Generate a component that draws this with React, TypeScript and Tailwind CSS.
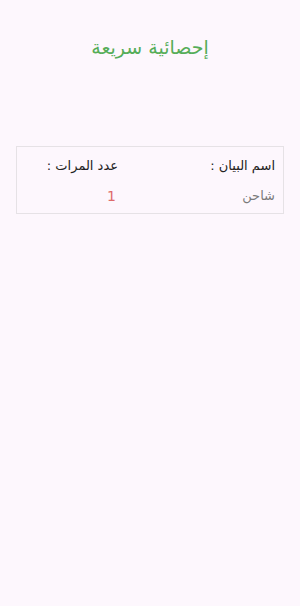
import React from 'react';

const rows = [{ name: 'شاحن', count: 1 }];

export default function App() {
    return (
        <div
            dir="rtl"
            className="w-[300px] h-[606px] bg-[#fdf7fd] px-4"
            style={{ fontFamily: '"DejaVu Sans", "Noto Sans", sans-serif' }}
        >
            <h1 className="pt-[34px] text-center text-[19px] leading-[26px] text-[#55ad58]">
                إحصائية سريعة
            </h1>

            <div className="mt-[86px] border border-[#e6e2e6] px-2 pt-[10px] pb-[8px]">
                <div className="flex text-[13px] leading-[18px] text-[#222]">
                    <span className="w-[124px]">اسم البيان :</span>
                    <span className="mr-[33px]">عدد المرات :</span>
                </div>
                {rows.map((r) => (
                    <div key={r.name} className="mt-[12px] flex text-[13px] leading-[18px]">
                        <span className="w-[124px] text-[#7a7a7a]">{r.name}</span>
                        <span className="mr-[35px] text-[14px] text-[#de6b6b]">{r.count}</span>
                    </div>
                ))}
            </div>
        </div>
    );
}
